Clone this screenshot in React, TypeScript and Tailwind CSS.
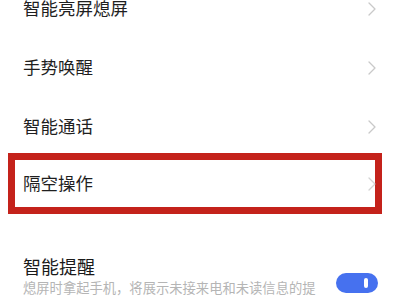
import React from 'react';

const Chevron = () => (
    <svg width="8" height="14" viewBox="0 0 8 14" fill="none" className="shrink-0">
        <path d="M1 1l6 6-6 6" stroke="#c9c9c9" strokeWidth="1.3" strokeLinecap="round" strokeLinejoin="round" />
    </svg>
);

const Row: React.FC<{ label: string }> = ({ label }) => (
    <div className="flex items-center justify-between h-[59px] pl-[23px] pr-[24px]">
        <span className="text-[17.5px] text-[#1f1f1f]">{label}</span>
        <Chevron />
    </div>
);

export default function App() {
    const rows = ['智能亮屏熄屏', '手势唤醒', '智能通话'];

    return (
        <div
            className="w-[400px] h-[300px] overflow-hidden bg-white"
            style={{ fontFamily: '"Noto Sans CJK SC", "Noto Sans", sans-serif' }}
        >
            <div className="-mt-[21px]">
                {rows.map(label => (
                    <Row key={label} label={label} />
                ))}

                {/* highlighted row */}
                <div className="-mt-[3px] ml-[8px] mr-[18px] h-[61px] border-[7px] border-[#c4221b] flex items-center justify-between pl-[8px] pr-0">
                    <span className="text-[17.5px] text-[#1f1f1f]">隔空操作</span>
                    <div className="-mr-[1px] opacity-80">
                        <Chevron />
                    </div>
                </div>

                <div className="mt-[40px] flex items-start justify-between pl-[23px] pr-[22px]">
                    <div className="flex flex-col">
                        <span className="text-[18px] leading-[24px] text-[#1a1a1a]">智能提醒</span>
                        <span className="w-[295px] text-[13.3px] leading-[20px] text-[#b5b5b5]">
                            熄屏时拿起手机，将展示未接来电和未读信息的提醒
                        </span>
                    </div>
                    <div className="mt-[19px] w-[42px] h-[20px] rounded-full bg-[#4671ef] flex items-center justify-end pr-[10px]">
                        <div className="w-[4px] h-[10px] rounded-full bg-white" />
                    </div>
                </div>
            </div>
        </div>
    );
}
